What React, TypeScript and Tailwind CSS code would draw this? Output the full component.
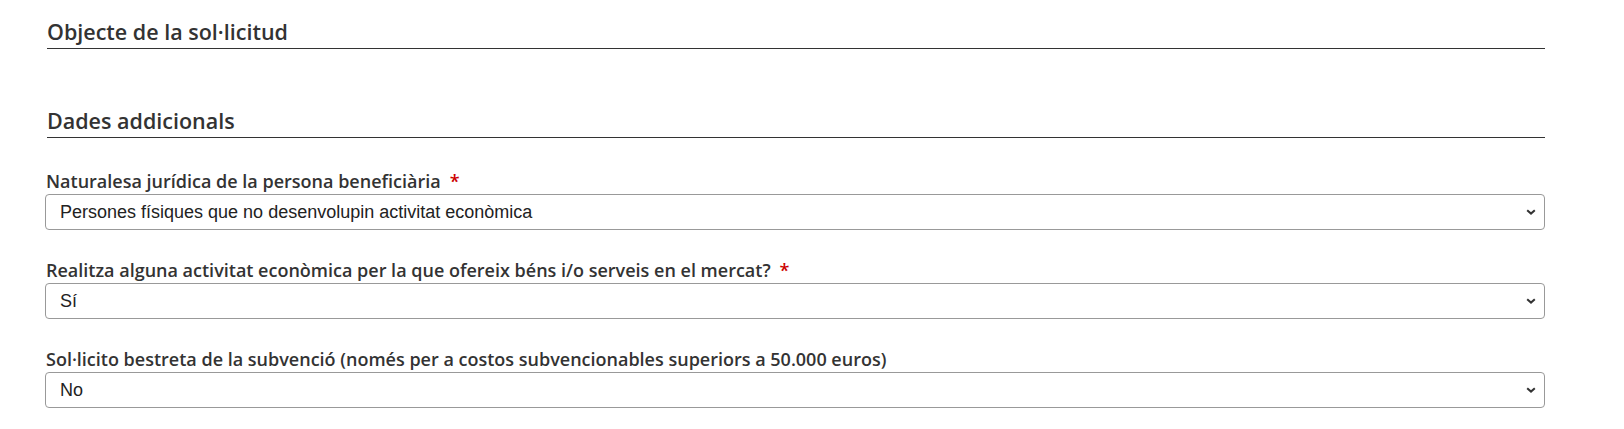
type Field = {
  label: string;
  value: string;
  required?: boolean;
};

const fields: Field[] = [
  {
    label: 'Naturalesa jurídica de la persona beneficiària',
    value: 'Persones físiques que no desenvolupin activitat econòmica',
    required: true,
  },
  {
    label: 'Realitza alguna activitat econòmica per la que ofereix béns i/o serveis en el mercat?',
    value: 'Sí',
    required: true,
  },
  {
    label: 'Sol·licito bestreta de la subvenció (només per a costos subvencionables superiors a 50.000 euros)',
    value: 'No',
  },
];

const SectionTitle = ({ children }: { children: string }) => (
  <h2 className="ml-[2px] border-b border-[#333] pb-[3px] text-[21.5px] leading-[26px] font-semibold text-[#333]">
    {children}
  </h2>
);

const SelectField = ({ label, value, required }: Field) => (
  <div className="flex flex-col">
    <label className="ml-[1px] text-[18px] leading-[25px] font-semibold text-[#333]">
      {label}
      {required && <span className="ml-[9px] text-[#cc0000]">*</span>}
    </label>
    <div className="relative">
      <select
        defaultValue={value}
        className="h-[36px] w-full appearance-none rounded-[4px] border border-[#999] bg-white pl-[14px] pr-8 font-['Liberation_Sans',Arial,sans-serif] text-[18px] text-[#222] outline-none"
      >
        <option>{value}</option>
      </select>
      {/* chevron like the native select arrow */}
      <svg
        width="10"
        height="6"
        viewBox="0 0 10 6"
        className="pointer-events-none absolute top-1/2 right-[9px] -translate-y-1/2"
      >
        <path d="M1.2 1.2 L5 4.6 L8.8 1.2" fill="none" stroke="#333" strokeWidth="2" />
      </svg>
    </div>
  </div>
);

export default function App() {
  return (
    <div className="min-h-screen bg-white font-['Open_Sans',sans-serif]">
      <div className="w-[1500px] ml-[45px] pt-[19px]">
        <SectionTitle>Objecte de la sol·licitud</SectionTitle>

        <div className="mt-[59px]">
          <SectionTitle>Dades addicionals</SectionTitle>
        </div>

        <div className="mt-[31px] flex flex-col gap-[28px]">
          {fields.map((f) => (
            <SelectField key={f.label} {...f} />
          ))}
        </div>
      </div>
    </div>
  );
}
